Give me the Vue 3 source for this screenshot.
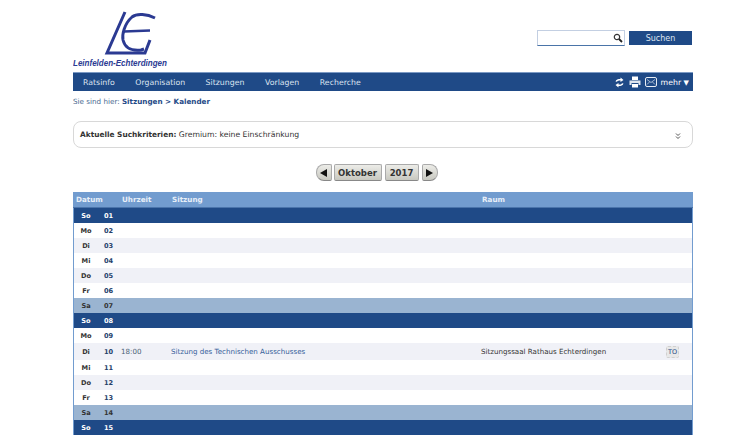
<script setup>
const rows = [
  ['So','01','sun'],['Mo','02','w'],['Di','03','g'],['Mi','04','w'],['Do','05','g'],['Fr','06','w'],['Sa','07','sat'],
  ['So','08','sun'],['Mo','09','w'],['Di','10','g ev'],['Mi','11','w'],['Do','12','g'],['Fr','13','w'],['Sa','14','sat'],['So','15','sun'],
]
</script>

<template>
  <div class="page">
    <header class="head">
      <div class="logo">
        <svg class="mark" width="94" height="46" viewBox="0 0 94 46">
          <path d="M52 1 L34 42 L72 42 L77 29" fill="none" stroke="#2b3a92" stroke-width="3"/>
          <path d="M82 7 C74 3 64 2 59 6 C51 13 49 24 50 29 C52 37 59 40 68 39 L71 38" fill="none" stroke="#2b3a92" stroke-width="2.9"/>
          <path d="M51 20.5 L77 19.5" fill="none" stroke="#2b3a92" stroke-width="2.4"/>
        </svg>
        <div class="city">Leinfelden-Echterdingen</div>
      </div>
      <div class="search">
        <div class="field">
          <svg width="10" height="10" viewBox="0 0 10 10"><circle cx="4" cy="4" r="2.7" fill="#fff" stroke="#333" stroke-width="1.2"/><path d="M6 6 L9 9" stroke="#222" stroke-width="1.8"/></svg>
        </div>
        <button class="go">Suchen</button>
      </div>
    </header>
    <nav class="nav">
      <a>Ratsinfo</a><a>Organisation</a><a>Sitzungen</a><a>Vorlagen</a><a>Recherche</a>
      <div class="tools">
        <svg width="9" height="11" viewBox="0 0 9 11"><path d="M0.5 4.5 C1 2.5 3 2 5.5 2 L5.5 0.5 L8.5 3 L5.5 5 L5.5 3.5 C4 3.5 2.5 3.5 2 4.8 Z M8.5 6.5 C8 8.5 6 9 3.5 9 L3.5 10.5 L0.5 8 L3.5 6 L3.5 7.5 C5 7.5 6.5 7.5 7 6.2 Z" fill="#fff"/></svg>
        <svg width="12" height="12" viewBox="0 0 12 12"><path d="M3 0.5 H9 V4 H3 Z" fill="#fff"/><path d="M0.5 4.5 H11.5 V9 H9.5 V7 H2.5 V9 H0.5 Z" fill="#dde4ee"/><path d="M3 8 H9 V11.5 H3 Z" fill="#fff"/></svg>
        <svg width="12" height="10" viewBox="0 0 12 10"><rect x="0.5" y="0.5" width="11" height="9" rx="1.5" fill="none" stroke="#e8edf4"/><path d="M2 2.5 L6 5.5 L10 2.5 M2 7.5 L4.5 5 M10 7.5 L7.5 5" fill="none" stroke="#c8d4e4" stroke-width="0.8"/></svg>
        <span class="more">mehr <i>▼</i></span>
      </div>
    </nav>
    <div class="crumb">Sie sind hier: <b>Sitzungen &gt; Kalender</b></div>
    <div class="criteria">
      <span><b>Aktuelle Suchkriterien:</b> Gremium: keine Einschränkung</span>
      <svg width="6" height="6" viewBox="0 0 6 6"><path d="M1 0.5 L3 2.5 L5 0.5 M1 3.5 L3 5.5 L5 3.5" fill="none" stroke="#555" stroke-width="1"/></svg>
    </div>
    <div class="pager">
      <button class="arrow left"><i class="tl"></i></button>
      <button class="pick">Oktober</button>
      <button class="pick">2017</button>
      <button class="arrow right"><i class="tr"></i></button>
    </div>
    <div class="table">
      <div class="row th">
        <span class="c1">Datum</span><span class="c2">Uhrzeit</span><span class="c3">Sitzung</span><span class="c4">Raum</span>
      </div>
      <div v-for="r in rows" :key="r[1]" class="row" :class="r[2]">
        <span class="day">{{ r[0] }}</span><span class="num">{{ r[1] }}</span>
        <template v-if="r[1] === '10'">
          <span class="time">18:00</span>
          <span class="title">Sitzung des Technischen Ausschusses</span>
          <span class="room">Sitzungssaal Rathaus Echterdingen</span>
          <span class="to">TO</span>
        </template>
      </div>
    </div>
  </div>
</template>

<style>
html, body { margin: 0; background: #fff; overflow: hidden; }
</style>

<style scoped>
.page { width: 620px; margin-left: 73px; font-family: "DejaVu Sans", Verdana, sans-serif; font-size: 8px; color: #333; }
.head { height: 72px; display: flex; justify-content: space-between; }
.logo { width: 100px; padding-top: 11px; box-sizing: border-box; }
.mark { display: block; }
.city { font: italic bold 9px/10px "Liberation Sans", sans-serif; color: #2b3a92; white-space: nowrap; margin-top: 1px; transform-origin: left; transform: scaleX(.89); }
.search { display: flex; gap: 4px; padding-top: 30px; padding-right: 1px; align-items: flex-start; }
.field { width: 88px; height: 16px; box-sizing: border-box; border: 1px solid #c3cfe2; border-bottom-color: #4a74a8; display: flex; align-items: center; justify-content: flex-end; padding-right: 1px; }
.go { width: 63px; height: 14px; margin-top: 1px; padding: 0; border: 0; background: #1f4a87; color: #dfe6f2; font: 8px "DejaVu Sans", sans-serif; }
.nav { height: 19px; background: #1f4a87; display: flex; align-items: center; color: #dde4f0; gap: 20.5px; padding-left: 10px; box-sizing: border-box; border-top: 1px solid #7c9ac4; font-size: 7.8px; }
.tools { margin-left: auto; display: flex; align-items: center; gap: 4px; padding-right: 4px; color: #fff; }
.tools svg:first-child { margin-right: 1px; }
.more { margin-left: 0; }
.more i { font-style: normal; font-size: 7px; }
.crumb { height: 20px; line-height: 22px; font-size: 7.2px; color: #4a6a90; }
.crumb b { color: #1f4a87; }
.criteria { margin-top: 10px; height: 27px; box-sizing: border-box; border: 1px solid #d8d8d8; border-radius: 8px; display: flex; align-items: center; justify-content: space-between; padding: 0 11px 0 6px; font-size: 7.7px; color: #333; }
.criteria b { font-size: 7.4px; }
.criteria svg { margin-top: 2px; }
.pager { margin-top: 16px; height: 28px; display: flex; justify-content: center; gap: 2px; align-items: flex-start; padding-right: 13px; }
.pager button { padding: 0; box-sizing: border-box; height: 17px; border: 1px solid #aaa; border-bottom-color: #888; background: linear-gradient(#ecece8, #c8c8c0); font: bold 8.5px "DejaVu Sans", sans-serif; color: #333; border-radius: 2px; display: flex; align-items: center; justify-content: center; }
.pick:nth-of-type(2) { width: 48px; }
.pick:nth-of-type(3) { width: 34px; margin-left: 1px; margin-right: 1px; }
.arrow { width: 16px; }
.arrow.left { border-radius: 8px 2px 2px 8px; }
.arrow.right { border-radius: 2px 8px 8px 2px; }
.tl, .tr { width: 0; height: 0; border-top: 4px solid transparent; border-bottom: 4px solid transparent; }
.tl { border-right: 7px solid #111; }
.tr { border-left: 7px solid #111; }
.table { border-left: 1px solid #729ccf; border-right: 1px solid #729ccf; }
.row { display: flex; height: 15px; align-items: center; font-size: 6.6px; font-weight: bold; color: #333; }
.th { height: 16px; margin-left: -1px; margin-right: -1px; background: #729ccf; color: #e8eff8; border-bottom: 1px solid #4a74ab; box-sizing: border-box; font-size: 7.2px; }
.c1 { width: 49px; padding-left: 3px; box-sizing: border-box; }
.c2 { width: 50px; }
.c3 { width: 310px; }
.sun { background: #1f4a87; color: #fff; }
.sat { background: #9ab4d1; color: #333; }
.w { background: #fff; }
.g { background: #f0f1f7; }
.ev { height: 17px; }
.day { width: 24px; text-align: center; margin-right: 6px; }
.num { width: 16px; color: #24406a; }
.sun .num { color: #fff; }
.sat .num { color: #333; }
.time, .title, .room { font-weight: normal; font-size: 7.1px; }
.time { width: 51px; padding-left: 1px; box-sizing: border-box; color: #4a5f75; }
.title { width: 310px; color: #35609a; }
.room { width: 185px; color: #333; }
.to { width: 13px; height: 12px; background: #e8e8e8; border: 1px dashed #d0d0d0; box-sizing: border-box; border-radius: 2px; font-size: 6.5px; font-weight: normal; color: #1f4a87; display: flex; align-items: center; justify-content: center; }
</style>
